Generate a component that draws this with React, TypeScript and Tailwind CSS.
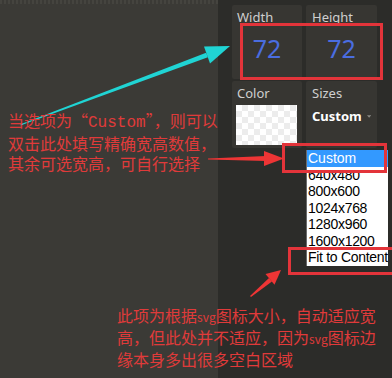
import React from "react";

const cjk = { fontFamily: '"Noto Sans CJK SC", "Noto Sans", sans-serif' };

export default function App() {
  const items = ["Custom", "640x480", "800x600", "1024x768", "1280x960", "1600x1200", "Fit to Content"];
  return (
    <div className="relative w-[392px] h-[378px] overflow-hidden flex" style={{ fontFamily: '"Noto Sans", sans-serif' }}>
      <div className="w-[218px] h-full bg-[#3b3a36] flex flex-col">
        <div className="h-[4px] bg-[repeating-linear-gradient(90deg,#45443f_0_2px,#3b3a36_2px_4px)]" />
      </div>
      <div className="flex-1 h-full bg-[#2c2c29] pl-[14px] pt-[5px]">
        <div className="grid grid-cols-[70px_71px] gap-x-[4px] gap-y-[2px]">
          <div className="h-[74px] bg-[#373632] rounded-[2px] px-[5px] pt-[3px] flex flex-col">
            <div className="text-[13px] leading-[18px] text-[#cfcfcf]">Width</div>
            <div className="flex-1 flex justify-center pt-[7px] text-[25px] leading-[30px] text-[#4a6de0]">72</div>
          </div>
          <div className="h-[74px] bg-[#373632] rounded-[2px] px-[6px] pt-[3px] flex flex-col">
            <div className="text-[13px] leading-[18px] text-[#cfcfcf]">Height</div>
            <div className="flex-1 flex justify-center pt-[7px] text-[25px] leading-[30px] text-[#4a6de0]">72</div>
          </div>
          <div className="h-[67px] bg-[#373632] rounded-[2px] px-[4px] pt-[3px] flex flex-col">
            <div className="text-[13px] leading-[18px] text-[#cfcfcf] pl-[1px]">Color</div>
            <div className="mt-[3px] w-[61px] h-[40px] bg-[repeating-conic-gradient(#ececec_0_25%,#ffffff_0_50%)] bg-[length:12px_12px]" />
          </div>
          <div className="h-[67px] bg-[#373632] rounded-[2px] px-[6px] pt-[3px] flex flex-col">
            <div className="text-[13px] leading-[18px] text-[#cfcfcf]">Sizes</div>
            <div className="mt-[5px] flex items-center gap-[5px]">
              <span className="text-[13px] leading-[18px] font-bold text-white">Custom</span>
              <svg width="9" height="5" viewBox="0 0 9 5"><path d="M0 0H9L4.5 5Z" fill="#8a8a86" /></svg>
            </div>
          </div>
        </div>
      </div>

      {/* dropdown menu */}
      <div className="absolute left-[306px] top-[150px] w-[82px] bg-white border-l border-[#6b6b6b] overflow-hidden" style={{ fontFamily: '"Liberation Sans", Arial, sans-serif' }}>
        {items.map((it, i) => (
          <div key={it} className={i === 0 ? "bg-[#3399ff] text-white text-[14px] leading-[16.5px] pl-[1px] whitespace-nowrap" : "text-black text-[14px] leading-[16.5px] pl-[1px] whitespace-nowrap tracking-[-0.3px]"}>{it}</div>
        ))}
      </div>

      {/* red boxes */}
      <div className="absolute left-[240px] top-[23px] w-[143px] h-[57px] border-[3px] border-[#e3343a]" />
      <div className="absolute left-[282px] top-[143px] w-[105px] h-[30px] border-[3px] border-[#e3343a]" />
      <div className="absolute left-[288px] top-[247px] w-[110px] h-[28px] border-[3px] border-[#e3343a]" />

      {/* arrows */}
      <svg className="absolute inset-0 pointer-events-none" width="392" height="378" viewBox="0 0 392 378">
        <polygon points="20,124.5 20.4,125.6 207.9,57.3 206.1,52.7" fill="#20d4d4" />
        <polygon points="230,46 210,63.4 204,46.6" fill="#20d4d4" />
        <polygon points="208,158.5 208,159.5 266,161 266,156" fill="#ee3535" />
        <polygon points="284,158.5 264,151 264,166" fill="#ee3535" />
        <polygon points="250,296 251,297 272,281.5 269,278" fill="#ee3535" />
        <polygon points="281,270 274.5,284.7 265.5,273.9" fill="#ee3535" />
      </svg>

      {/* annotations */}
      <div className="absolute left-[8px] top-[110px] text-[16px] leading-[20px] text-[#e03a3a] whitespace-nowrap" style={cjk}>
        <div>当选项为“<span style={{ fontFamily: '"Liberation Mono", monospace' }}>Custom</span>”，则可以</div>
        <div>双击此处填写精确宽高数值，</div>
        <div>其余可选宽高，可自行选择</div>
      </div>
      <div className="absolute left-[117px] top-[305px] text-[16px] leading-[20px] text-[#e03a3a] whitespace-nowrap" style={cjk}>
        <div>此项为根据<span className="text-[12px]">svg</span>图标大小，自动适应宽</div>
        <div>高，但此处并不适应，因为<span className="text-[12px]">svg</span>图标边</div>
        <div>缘本身多出很多空白区域</div>
      </div>
    </div>
  );
}
